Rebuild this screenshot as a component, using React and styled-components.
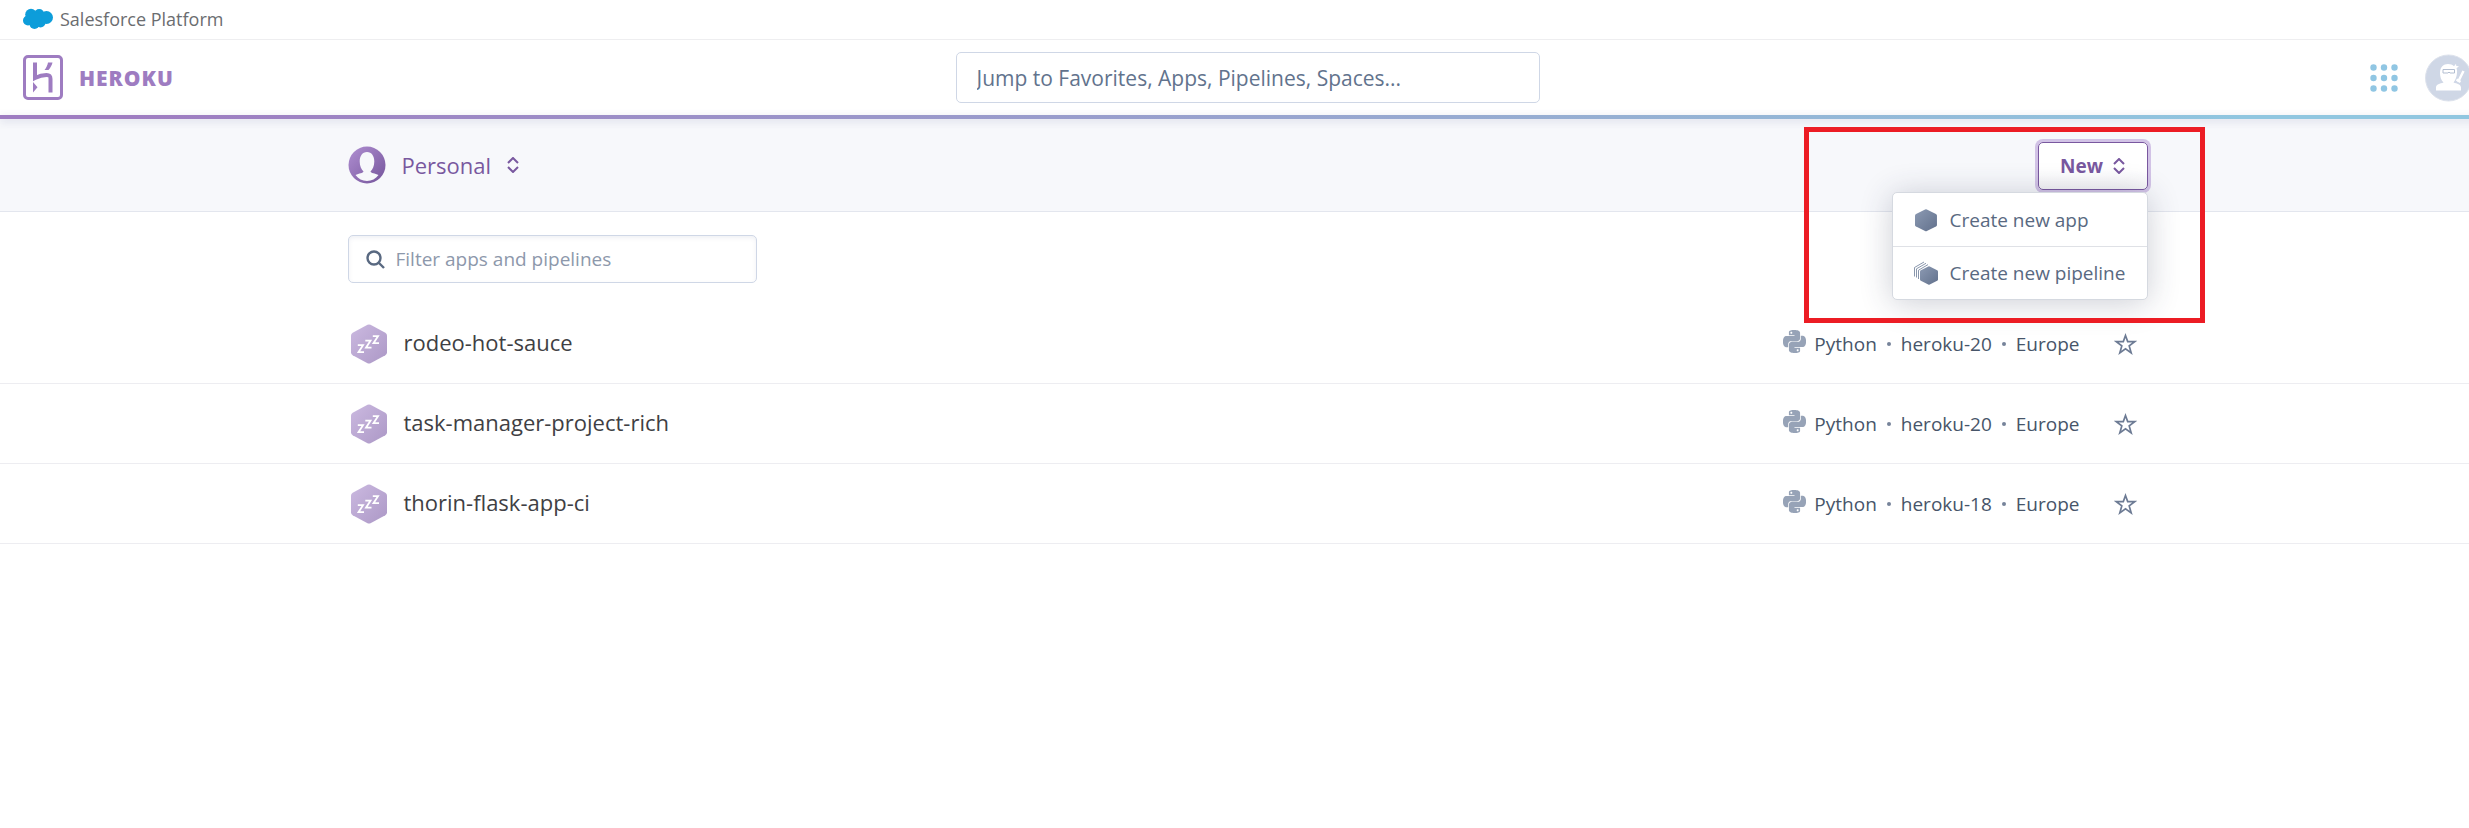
import React from 'react';
import styled, { createGlobalStyle } from 'styled-components';
import { SiPython } from 'react-icons/si';

const GlobalStyle = createGlobalStyle`
  *, *::before, *::after { box-sizing: border-box; }
  body {
    margin: 0;
    background: #fff;
    color: #3f4a5a;
    font-family: "Open Sans", "Noto Sans", sans-serif;
    overflow: hidden;
  }
  button, input { font: inherit; color: inherit; margin: 0; }
  a { color: inherit; text-decoration: none; }
`;

const Page = styled.div`
  width: calc(100% + 26px);
  min-height: 100vh;
`;

const PlatformBar = styled.div`
  height: 40px;
  padding: 0 23px 2px;
  display: flex;
  align-items: center;
  border-bottom: 1px solid #eeeef0;
`;

const PlatformLink = styled.a`
  display: flex;
  align-items: center;
  gap: 7px;
  font-size: 18px;
  line-height: 24px;
  color: #6b6d70;
`;

const Header = styled.header`
  display: grid;
  grid-template-columns: 1fr 584px 1fr;
  align-items: center;
  height: 75px;
  padding: 0 23px;
`;

const GradientRule = styled.div`
  position: relative;
  height: 4px;
  background: linear-gradient(to right, #9e7cc1, #9e7cc1 5%, #96b0d3 65%, #90c6e0 90%);
  box-shadow: 0 2px 8px rgba(60, 70, 130, 0.2);
`;

const Brand = styled.a`
  display: flex;
  align-items: center;
  gap: 16px;
  justify-self: start;
  font-size: 21px;
  line-height: 28px;
  font-weight: 800;
  letter-spacing: 1px;
  color: #9e7cc1;
`;

const JumpInput = styled.input`
  width: 100%;
  height: 51px;
  padding: 0 20px;
  border: 1px solid #cfd7e6;
  border-radius: 5px;
  background: #fff;
  font-size: 21px;
  outline: none;
  &::placeholder { color: #62738d; opacity: 1; }
`;

const HeaderActions = styled.div`
  display: flex;
  align-items: center;
  justify-content: flex-end;
  gap: 27px;
`;

const IconButton = styled.button`
  display: flex;
  padding: 0;
  border: 0;
  background: none;
`;

const SubHeader = styled.div`
  height: 93px;
  background: #f7f8fb;
  border-bottom: 1px solid #e3e6ee;
`;

const Container = styled.div`
  max-width: 1800px;
  height: 100%;
  margin: 0 auto;
  display: flex;
  align-items: center;
  justify-content: space-between;
`;

const AccountButton = styled.button`
  display: flex;
  align-items: center;
  gap: 16px;
  padding: 0;
  border: 0;
  background: none;
  font-size: 22px;
  line-height: 30px;
  color: #79589f;
`;

const MenuAnchor = styled.div`
  position: relative;
  align-self: flex-start;
  padding-top: 23px;
`;

const NewButton = styled.button`
  display: flex;
  align-items: center;
  justify-content: center;
  gap: 10px;
  width: 110px;
  height: 48px;
  padding: 0;
  border: 1px solid #79589f;
  border-radius: 5px;
  background: linear-gradient(#fff 60%, #f5f5f7);
  box-shadow: 0 0 0 3px #d2c3e6;
  font-size: 19px;
  font-weight: 700;
  color: #79589f;
`;

const Menu = styled.div`
  position: absolute;
  top: 73px;
  right: 0;
  width: 256px;
  border: 1px solid #d5d9e0;
  border-radius: 5px;
  background: #fff;
  box-shadow: 0 3px 32px rgba(40, 50, 80, 0.24);
  z-index: 2;
`;

const MenuItem = styled.a`
  display: flex;
  align-items: center;
  gap: 11px;
  height: 53px;
  padding: 0 20px;
  font-size: 19px;
  line-height: 26px;
  white-space: nowrap;
  color: #596981;
  & + & { border-top: 1px solid #dfe1e6; }
`;

const Highlight = styled.div`
  position: absolute;
  top: 8px;
  right: -57px;
  width: 401px;
  height: 196px;
  border: 5px solid #ec1c24;
  z-index: 3;
  pointer-events: none;
`;

const FilterRow = styled(Container)`
  height: auto;
  padding: 23px 0 21px;
`;

const FilterBox = styled.label`
  display: flex;
  align-items: center;
  gap: 11px;
  width: 409px;
  height: 48px;
  padding: 0 17px;
  border: 1px solid #cfd7e6;
  border-radius: 5px;
  box-shadow: inset 0 2px 4px rgba(100, 110, 150, 0.1);
`;

const FilterInput = styled.input`
  flex: 1;
  min-width: 0;
  padding: 0;
  border: 0;
  background: none;
  outline: none;
  font-size: 19px;
  &::placeholder { color: #8d98ab; opacity: 1; }
`;

const AppList = styled.ul`
  list-style: none;
  margin: 0;
  padding: 0;
`;

const AppRow = styled.li`
  height: 80px;
  border-bottom: 1px solid #ededf1;
`;

const AppLink = styled.a`
  display: flex;
  align-items: center;
  gap: 17px;
  padding-left: 3px;
  font-size: 22px;
  line-height: 30px;
  color: #3f3f44;
`;

const AppName = styled.span`
  padding-bottom: 3px;
`;

const Meta = styled.div`
  display: flex;
  align-items: center;
  padding-right: 11px;
  font-size: 19px;
  line-height: 26px;
  color: #475569;
`;

const Language = styled.span`
  display: flex;
  align-items: center;
  gap: 8px;
`;

const PythonIcon = styled(SiPython)`
  margin-bottom: 4px;
  color: #97a3b7;
`;

const Dot = styled.span`
  width: 4px;
  height: 4px;
  margin: 0 10px;
  border-radius: 50%;
  background: #76839a;
`;

const StarButton = styled(IconButton)`
  margin-left: 34px;
`;

const Cloud = () => (
  <svg width="30" height="22" viewBox="0 0 30 22" fill="#0d9dda" aria-hidden="true">
    <circle cx="8" cy="6.5" r="5.8" /><circle cx="16.2" cy="6" r="5" /><circle cx="23.5" cy="9.5" r="6.5" />
    <circle cx="5" cy="12.5" r="5" /><circle cx="11.5" cy="16" r="5" /><circle cx="17.5" cy="14.5" r="5" />
    <circle cx="12.5" cy="10" r="6" />
  </svg>
);

const HerokuMark = () => (
  <svg width="40" height="45" viewBox="0 0 40 45" fill="none" aria-hidden="true">
    <rect x="1.5" y="1.5" width="37" height="42" rx="3.5" stroke="#9e7cc1" strokeWidth="3" />
    <path d="M12 7.5v15.5c4-2 8-3 11.5-3 3.5 0 4 1.5 4 4v13.5" stroke="#9e7cc1" strokeWidth="4" />
    <path d="M10 27v10.5l4.500-5.200zM25 7.500h4.500c-.6 2.800-1.900 5-4 7.500h-4c2-2.500 3-4.800 3.500-7.500z" fill="#9e7cc1" />
  </svg>
);

const Grid = () => (
  <svg width="28" height="28" viewBox="0 0 28 28" fill="#90c6e3" aria-hidden="true">
    {[3.5, 14, 24.5].map((y) => [3.5, 14, 24.5].map((x) => <circle key={`${x}-${y}`} cx={x} cy={y} r="3.2" />))}
  </svg>
);

const Ninja = () => (
  <svg width="47" height="48" viewBox="0 0 47 48" aria-hidden="true">
    <circle cx="23.5" cy="24" r="23" fill="#cfd7e6" stroke="#dde2ec" strokeWidth="1" />
    <path d="M11 36.500v-3c0-3 4-4 7.500-5-2.500-2.500-3.500-6-3.500-9.500 0-6 3.500-9 8-9 2.500 0 4.500.8 6 2.300l2-2.500.3 2.200 2.700.2-2.500 2c.6 1.500.7 3 .5 4.800-.3 4-1.500 7-3.500 9.500 3.500 1 7.500 2 7.500 5v3z" fill="#fff" />
    <path d="M18 15.500h11.500v3.500h-4.500l-1-1-1 1h-5z" fill="none" stroke="#b3bed1" strokeWidth="1" />
    <path d="M38.500 17l-5.500 11M31.500 25.500l4 2.500" stroke="#fff" strokeWidth="2.500" />
  </svg>
);

const PersonalAvatar = () => (
  <svg width="38" height="38" viewBox="0 0 38 38" aria-hidden="true">
    <defs>
      <linearGradient id="personal" x1="0" y1="0" x2="1" y2="1">
        <stop offset="0" stopColor="#b08fd2" /><stop offset="1" stopColor="#74549a" />
      </linearGradient>
    </defs>
    <circle cx="19" cy="19" r="18.5" fill="url(#personal)" />
    <path d="M19 6c4.700 0 7.300 4.200 7.300 9.500 0 4.500-1.700 8-3.800 10 .3 1.800 4.500 1.800 8 3.500-2.800 3.700-6.800 6-11.500 6s-8.700-2.300-11.500-6c3.500-1.700 7.700-1.700 8-3.500-2.100-2-3.800-5.500-3.800-10C11.700 10.200 14.300 6 19 6z" fill="#f7f8fb" />
  </svg>
);

const Chevrons = () => (
  <svg width="12" height="16" viewBox="0 0 12 16" fill="none" stroke="#79589f" strokeWidth="2" aria-hidden="true">
    <path d="M1 6l5-5 5 5M1 10l5 5 5-5" />
  </svg>
);

const Search = () => (
  <svg width="19" height="19" viewBox="0 0 19 19" fill="none" stroke="#596981" strokeWidth="2.4" aria-hidden="true">
    <circle cx="8" cy="8" r="6.5" /><path d="M12.500 12.500l5.500 5.500" />
  </svg>
);

const HEX = 'M16.500.8q1.500-.8 3 0l14.800 8q1.700 1 1.700 2.800v16.800q0 1.800-1.700 2.800l-14.800 8q-1.500.8-3 0l-14.800-8Q0 30.200 0 28.400V11.600Q0 9.800 1.700 8.800z';

const SleepingHex = () => (
  <svg width="36" height="40" viewBox="0 0 36 40" aria-hidden="true">
    <defs>
      <linearGradient id="sleeping" x1="0" y1="0" x2="1" y2="1">
        <stop offset="0" stopColor="#cbb9e0" /><stop offset="1" stopColor="#ac98c6" />
      </linearGradient>
    </defs>
    <path d={HEX} fill="url(#sleeping)" />
    <path d="M6.800 21.200h5.200l-4.500 7h5.500M14.300 16.700h5.200l-4.500 7h5.500M21.800 12.200h5.200l-4.500 7h5.500" fill="none" stroke="#fff" strokeWidth="1.800" />
  </svg>
);

const SlateGradient = ({ id }) => (
  <defs>
    <linearGradient id={id} x1="0" y1="0" x2="1" y2="1">
      <stop offset="0" stopColor="#8c9ab3" /><stop offset="1" stopColor="#62718c" />
    </linearGradient>
  </defs>
);

const AppHex = () => (
  <svg width="26" height="24" viewBox="0 0 26 24" aria-hidden="true">
    <SlateGradient id="slate-app" />
    <path transform="translate(2 1) scale(.61 .56)" d={HEX} fill="url(#slate-app)" />
  </svg>
);

const PipelineHex = () => (
  <svg width="26" height="24" viewBox="0 0 26 24" aria-hidden="true">
    <SlateGradient id="slate-pipeline" />
    <path transform="translate(7 5) scale(.5 .475)" d={HEX} fill="url(#slate-pipeline)" />
    <path d="M1.500 15.500V6.500L11 1M3.500 16.500V7.800L13 2.300M5.500 18V9.200L15 3.600" fill="none" stroke="#7c8aa3" strokeWidth=".9" />
  </svg>
);

const Star = () => (
  <svg width="23" height="22" viewBox="0 0 23 22" fill="none" stroke="#6d7b94" strokeWidth="1.7" aria-hidden="true">
    <path d="M11.500 2.500l2.200 6.100h7l-5.500 4.300 2 7-5.700-4-5.700 4 2-7L2.300 8.600h7z" />
  </svg>
);

const apps = [
  { name: 'rodeo-hot-sauce', stack: 'heroku-20' },
  { name: 'task-manager-project-rich', stack: 'heroku-20' },
  { name: 'thorin-flask-app-ci', stack: 'heroku-18' },
];

export default function App() {
  return (
    <Page>
      <GlobalStyle />
      <PlatformBar>
        <PlatformLink href="#platform"><Cloud />Salesforce Platform</PlatformLink>
      </PlatformBar>
      <Header>
        <Brand href="#home"><HerokuMark />HEROKU</Brand>
        <JumpInput type="text" aria-label="Jump to" placeholder="Jump to Favorites, Apps, Pipelines, Spaces..." />
        <HeaderActions>
          <IconButton aria-label="Products"><Grid /></IconButton>
          <IconButton aria-label="Account"><Ninja /></IconButton>
        </HeaderActions>
      </Header>
      <GradientRule />
      <SubHeader>
        <Container>
          <AccountButton><PersonalAvatar />Personal<Chevrons /></AccountButton>
          <MenuAnchor>
            <NewButton aria-haspopup="true" aria-expanded="true">New<Chevrons /></NewButton>
            <Menu>
              <MenuItem href="#new-app"><AppHex />Create new app</MenuItem>
              <MenuItem href="#new-pipeline"><PipelineHex />Create new pipeline</MenuItem>
            </Menu>
            <Highlight />
          </MenuAnchor>
        </Container>
      </SubHeader>
      <main>
        <FilterRow>
          <FilterBox>
            <Search />
            <FilterInput type="text" aria-label="Filter apps and pipelines" placeholder="Filter apps and pipelines" />
          </FilterBox>
        </FilterRow>
        <AppList>
          {apps.map((app) => (
            <AppRow key={app.name}>
              <Container>
                <AppLink href={`#${app.name}`}><SleepingHex /><AppName>{app.name}</AppName></AppLink>
                <Meta>
                  <Language><PythonIcon size={23} />Python</Language>
                  <Dot />
                  <span>{app.stack}</span>
                  <Dot />
                  <span>Europe</span>
                  <StarButton aria-label={`Favorite ${app.name}`}><Star /></StarButton>
                </Meta>
              </Container>
            </AppRow>
          ))}
        </AppList>
      </main>
    </Page>
  );
}
